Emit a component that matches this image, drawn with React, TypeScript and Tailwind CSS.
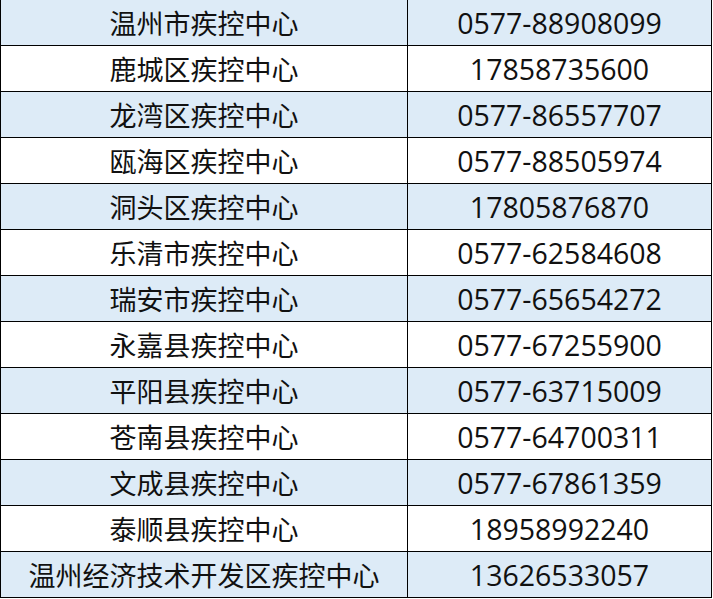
const rows: [string, string][] = [
  ["温州市疾控中心", "0577-88908099"],
  ["鹿城区疾控中心", "17858735600"],
  ["龙湾区疾控中心", "0577-86557707"],
  ["瓯海区疾控中心", "0577-88505974"],
  ["洞头区疾控中心", "17805876870"],
  ["乐清市疾控中心", "0577-62584608"],
  ["瑞安市疾控中心", "0577-65654272"],
  ["永嘉县疾控中心", "0577-67255900"],
  ["平阳县疾控中心", "0577-63715009"],
  ["苍南县疾控中心", "0577-64700311"],
  ["文成县疾控中心", "0577-67861359"],
  ["泰顺县疾控中心", "18958992240"],
  ["温州经济技术开发区疾控中心", "13626533057"],
];

export default function App() {
  return (
    <div className="w-[713px] h-[599px] bg-white">
      <div
        className="w-[712px] border-l border-r border-black text-[#111]"
        style={{ fontFamily: '"Open Sans", "Noto Sans CJK SC", sans-serif' }}
      >
        {rows.map(([name, phone], i) => (
          <div
            key={name}
            className={
              "grid grid-cols-[407px_1fr] h-[46px] border-b border-black " +
              (i % 2 === 0 ? "bg-[#ddebf7]" : "bg-white")
            }
          >
            <div className="flex items-center justify-center border-r border-black text-[27px] leading-none pt-[2px]">
              {name}
            </div>
            <div className="flex items-center justify-center text-[28.5px] leading-none pt-[2px]">
              {phone}
            </div>
          </div>
        ))}
      </div>
    </div>
  );
}
